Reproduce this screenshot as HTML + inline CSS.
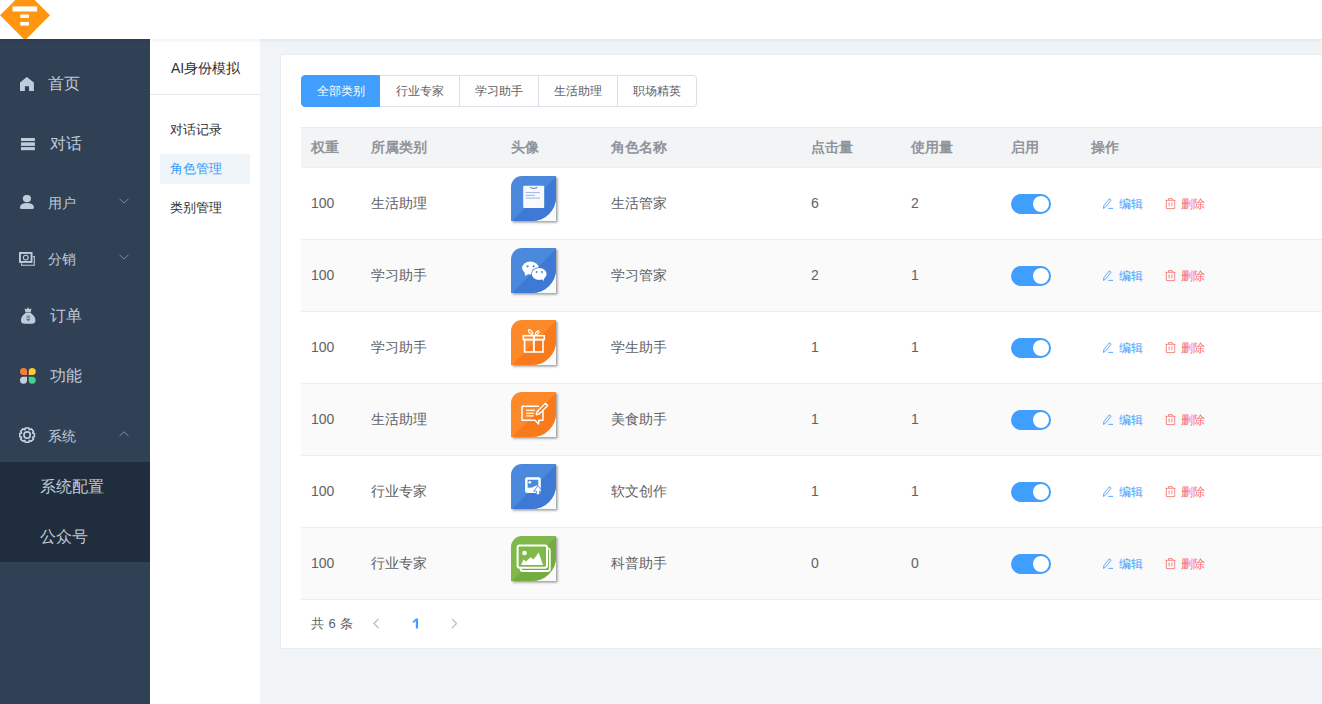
<!DOCTYPE html>
<html><head><meta charset="utf-8">
<style>
*{box-sizing:border-box;margin:0;padding:0}
html,body{width:1322px;height:704px;overflow:hidden;background:#f0f4f7;font-family:"Liberation Sans",sans-serif;position:relative}
.abs{position:absolute;white-space:nowrap}
#header{position:absolute;left:0;top:0;width:1322px;height:39px;background:#fff;z-index:3;box-shadow:0 1px 4px rgba(0,21,41,.08)}
#logo{position:absolute;left:0;top:0;width:50px;height:39px;z-index:4;overflow:hidden}
#side{position:absolute;left:0;top:39px;width:150px;height:665px;background:#304156}
#sub{position:absolute;left:0;top:423px;width:150px;height:100px;background:#1f2d3d}
.mi{position:absolute;color:#bfcbd9;line-height:1;white-space:nowrap}
.ic{position:absolute;line-height:0}
#side2{position:absolute;left:150px;top:39px;width:110px;height:665px;background:#fff}
.s2{position:absolute;left:20px;font-size:13px;color:#303133;line-height:1;white-space:nowrap}
#card{position:absolute;left:280px;top:54px;width:1100px;height:595px;background:#fff;border:1px solid #ebebeb}
.tab{position:absolute;top:75px;height:32px;width:80px;border:1px solid #dcdfe6;font-size:12px;color:#606266;text-align:center;line-height:31px;background:#fff;white-space:nowrap}
.th{position:absolute;top:127px;left:301px;width:1030px;height:41px;background:#f3f4f6;border-top:1px solid #ebebeb;border-bottom:1px solid #ebeef5}
.thc{position:absolute;font-size:14px;font-weight:bold;color:#909399;line-height:1;white-space:nowrap;top:140px}
.row{position:absolute;left:301px;width:1030px;height:72px;border-bottom:1px solid #ebeef5;background:#fff}
.row.s{background:#fafafa}
.c{position:absolute;font-size:14px;color:#606266;line-height:1;white-space:nowrap}
.sw{position:absolute;width:40px;height:20px;border-radius:10px;background:#409eff}
.sw:after{content:"";position:absolute;right:2px;top:2px;width:16px;height:16px;border-radius:50%;background:#fff}
.ed{position:absolute;font-size:12px;color:#409eff;line-height:1;white-space:nowrap}
.dl{position:absolute;font-size:12px;color:#f56c6c;line-height:1;white-space:nowrap}
</style></head><body>
<div id="header"></div>
<div id="logo"><svg width="50" height="39" viewBox="0 0 50 39"><path d="M25 -9.7 L50 15.3 L25 40.3 L0 15.3 Z" fill="#ff9511"/><rect x="12.6" y="6.4" width="24.6" height="5.1" fill="#fff"/><rect x="20.3" y="14.5" width="8.7" height="3.4" fill="#fff"/><rect x="20.3" y="22" width="8.7" height="3.6" fill="#fff"/></svg></div>

<div id="side">
<div id="sub"></div>
<div class="ic" style="left:20px;top:37px"><svg width="16" height="16" viewBox="0 0 16 16"><path d="M6.8 0.9 L13.9 6.6 V14.9 H9 V10.3 H4.9 V14.9 H0 V6.6 Z" fill="#c0ccda"/></svg></div>
<div class="mi" style="left:48px;top:37px;font-size:16px">首页</div>
<div class="ic" style="left:21px;top:99px"><svg width="16" height="16" viewBox="0 0 16 16"><rect x="0" y="0" width="13.9" height="3" fill="#c0ccda"/><rect x="0" y="4.3" width="13.9" height="3.6" fill="#c0ccda"/><rect x="0" y="9.1" width="13.9" height="3.1" fill="#c0ccda"/></svg></div>
<div class="mi" style="left:50px;top:97px;font-size:16px">对话</div>
<div class="ic" style="left:20px;top:156px"><svg width="16" height="16" viewBox="0 0 16 16"><ellipse cx="6.9" cy="3.6" rx="4.1" ry="3.7" fill="#c0ccda"/><path d="M0 12.5 Q0 8 6.9 8 Q13.9 8 13.9 12.5 Q13.9 14 12.5 14 H1.4 Q0 14 0 12.5Z" fill="#c0ccda"/></svg></div>
<div class="mi" style="left:48px;top:157px;font-size:14px">用户</div>
<div class="ic" style="left:119px;top:159px"><svg width="12" height="8" viewBox="0 0 12 8"><path d="M0.5 0.8 L5 5 L9.5 0.8" stroke="#7d8a9c" stroke-width="1" fill="none"/></svg></div>
<div class="ic" style="left:19px;top:213px"><svg width="18" height="16" viewBox="0 0 18 16"><g fill="none" stroke="#c0ccda"><path d="M2.6 11.3 V13.3 H15.3 V4.5 H13.9" stroke-width="1.1"/><rect x="0.95" y="0.95" width="11.6" height="9.0" stroke-width="1.9"/><circle cx="6.8" cy="5.6" r="2.4" stroke-width="1.1"/></g></svg></div>
<div class="mi" style="left:48px;top:213px;font-size:14px">分销</div>
<div class="ic" style="left:119px;top:215px"><svg width="12" height="8" viewBox="0 0 12 8"><path d="M0.5 0.8 L5 5 L9.5 0.8" stroke="#7d8a9c" stroke-width="1" fill="none"/></svg></div>
<div class="ic" style="left:20.8px;top:268.3px"><svg width="16" height="18" viewBox="0 0 16 18"><path d="M7.2 0.2 L8.4 2.3 L10.5 1.5 L9.6 5.4 H4.6 L3.5 1.5 L5.8 2.3 Z" fill="#c0ccda"/><path d="M4.5 5.9 H9.7 Q14.4 9.2 14.4 13.2 Q14.4 16.8 10.8 16.8 H3.6 Q0 16.8 0 13.2 Q0 9.2 4.5 5.9Z" fill="#c0ccda"/><g fill="#56647a"><rect x="5.5" y="8.8" width="3.6" height="0.9"/><rect x="5.5" y="10.5" width="3.6" height="0.9"/><rect x="5.5" y="12.2" width="3.6" height="0.9"/><path d="M6.2 13.1 H8.4 L7.3 14.3 Z"/></g></svg></div>
<div class="mi" style="left:50px;top:269px;font-size:16px">订单</div>
<div class="ic" style="left:20px;top:329px"><svg width="17" height="17" viewBox="0 0 17 17"><path d="M7 7 H3.5 A3.5 3.5 0 1 1 7 3.5 Z" fill="#fb7c34"/><path d="M8.7 7 V3.5 A3.5 3.5 0 1 1 12.2 7 Z" fill="#fdcc31"/><path d="M7 8.7 V12.2 A3.5 3.5 0 1 1 3.5 8.7 Z" fill="#c6d0dc"/><path d="M8.7 8.7 H12.2 A3.5 3.5 0 1 1 8.7 12.2 Z" fill="#48cf8d"/></svg></div>
<div class="mi" style="left:50px;top:329px;font-size:16px">功能</div>
<div class="ic" style="left:18.9px;top:388px"><svg width="18" height="18" viewBox="0 0 18 18"><g fill="none" stroke="#c8d3e0" stroke-width="1.6" stroke-linejoin="round"><path d="M6.3 1 H9.9 L10.4 2.8 L12.3 1.9 L14.5 4.2 L13.6 6 L15.4 6.6 V9.7 L13.6 10.3 L14.5 12.1 L12.3 14.3 L10.4 13.4 L9.9 15.2 H6.3 L5.8 13.4 L3.9 14.3 L1.7 12.1 L2.6 10.3 L0.8 9.7 V6.6 L2.6 6 L1.7 4.2 L3.9 1.9 L5.8 2.8 Z"/><circle cx="8.1" cy="8.1" r="3.2"/></g></svg></div>
<div class="mi" style="left:48px;top:389.5px;font-size:14px">系统</div>
<div class="ic" style="left:119px;top:391.5px"><svg width="12" height="8" viewBox="0 0 12 8"><path d="M0.5 5 L5 0.8 L9.5 5" stroke="#7d8a9c" stroke-width="1" fill="none"/></svg></div>
<div class="mi" style="left:40px;top:440px;font-size:16px">系统配置</div>
<div class="mi" style="left:40px;top:490px;font-size:16px">公众号</div>
</div>

<div id="side2">
<div class="s2" style="top:22px;left:21px;font-size:14px">AI身份模拟</div>
<div style="position:absolute;left:0;top:55px;width:110px;height:1px;background:#e6e6e6"></div>
<div class="s2" style="top:84px">对话记录</div>
<div style="position:absolute;left:10px;top:115px;width:90px;height:30px;background:#eef4f8"></div>
<div class="s2" style="top:122.5px;color:#3a9afc">角色管理</div>
<div class="s2" style="top:162px">类别管理</div>
</div>

<div id="card"></div>
<div class="tab" style="left:301px;width:79px;background:#409eff;border-color:#409eff;color:#fff;border-radius:4px 0 0 4px">全部类别</div>
<div class="tab" style="left:380px;border-left:0">行业专家</div>
<div class="tab" style="left:460px;width:79px;border-left:0">学习助手</div>
<div class="tab" style="left:539px;width:79px;border-left:0">生活助理</div>
<div class="tab" style="left:618px;width:79px;border-left:0;border-radius:0 4px 4px 0">职场精英</div>

<div class="th"></div>
<div class="thc" style="left:311px">权重</div>
<div class="thc" style="left:371px">所属类别</div>
<div class="thc" style="left:511px">头像</div>
<div class="thc" style="left:611px">角色名称</div>
<div class="thc" style="left:811px">点击量</div>
<div class="thc" style="left:911px">使用量</div>
<div class="thc" style="left:1011px">启用</div>
<div class="thc" style="left:1091px">操作</div>

<div class="row" style="top:168px"></div>
<div class="c" style="left:311px;top:196px">100</div>
<div class="c" style="left:371px;top:196px">生活助理</div>
<div class="abs" style="left:511px;top:176px;line-height:0"><svg width="49" height="49" viewBox="0 0 49 49"><defs><filter id="shdoc" x="-20%" y="-20%" width="140%" height="140%"><feGaussianBlur stdDeviation="0.8"/></filter><clipPath id="cldoc"><path d="M0 11 A11 11 0 0 1 11 0 H45 V21 A24 24 0 0 1 21 45 H0 Z"/></clipPath></defs><path d="M1.5 12.5 A11 11 0 0 1 12.5 1.5 H46.5 V46.5 H1.5 Z" fill="#9a9a9a" filter="url(#shdoc)"/><path d="M0 11 A11 11 0 0 1 11 0 H45 V45 H0 Z" fill="#f9fafb"/><g clip-path="url(#cldoc)"><rect width="45" height="45" fill="#4a89dc"/><path d="M0 46 L45 1 V45 H0 Z" fill="#3e7ad5"/></g><rect x="12.2" y="9.8" width="21" height="22.2" rx="1" fill="#f8f9fb"/><path d="M19.2 11.1 Q19.8 12.4 22.7 12.4 Q25.6 12.4 26.2 11.1" stroke="#5f8fdc" stroke-width="1.1" fill="none"/><rect x="14.5" y="16.2" width="14.5" height="0.9" fill="#8fb0e6"/><rect x="14.5" y="18.9" width="9.5" height="0.9" fill="#8fb0e6"/><rect x="14.5" y="21.6" width="14.5" height="0.9" fill="#8fb0e6"/></svg></div>
<div class="c" style="left:611px;top:196px">生活管家</div>
<div class="c" style="left:811px;top:196px">6</div>
<div class="c" style="left:911px;top:196px">2</div>
<div class="sw" style="left:1011px;top:194px"></div>
<div class="abs" style="left:1102px;top:198px;line-height:0"><svg width="12" height="12" viewBox="0 0 12 12"><path d="M1.5 10.4 L1.8 7.8 L7.3 0.8 L9.1 2.1 L3.6 9.1 Z" stroke="#409eff" stroke-width="0.85" fill="none" stroke-linejoin="round"/><path d="M6.3 10.4 H11" stroke="#409eff" stroke-width="0.9"/></svg></div>
<div class="ed" style="left:1119px;top:198px">编辑</div>
<div class="abs" style="left:1164.5px;top:198px;line-height:0"><svg width="12" height="12" viewBox="0 0 12 12"><g stroke="#f56c6c" stroke-width="0.8" fill="none"><path d="M0.6 2.3 H10.4"/><path d="M3.6 2.3 V0.6 H7.4 V2.3"/><path d="M1.3 2.3 V10.6 H9.7 V2.3"/><path d="M4.1 4.5 V8.3 M6.9 4.5 V8.3"/></g></svg></div>
<div class="dl" style="left:1181px;top:198px">删除</div>
<div class="row s" style="top:240px"></div>
<div class="c" style="left:311px;top:268px">100</div>
<div class="c" style="left:371px;top:268px">学习助手</div>
<div class="abs" style="left:511px;top:248px;line-height:0"><svg width="49" height="49" viewBox="0 0 49 49"><defs><filter id="shwechat" x="-20%" y="-20%" width="140%" height="140%"><feGaussianBlur stdDeviation="0.8"/></filter><clipPath id="clwechat"><path d="M0 11 A11 11 0 0 1 11 0 H45 V21 A24 24 0 0 1 21 45 H0 Z"/></clipPath></defs><path d="M1.5 12.5 A11 11 0 0 1 12.5 1.5 H46.5 V46.5 H1.5 Z" fill="#9a9a9a" filter="url(#shwechat)"/><path d="M0 11 A11 11 0 0 1 11 0 H45 V45 H0 Z" fill="#f9fafb"/><g clip-path="url(#clwechat)"><rect width="45" height="45" fill="#4a89dc"/><path d="M0 46 L45 1 V45 H0 Z" fill="#3e7ad5"/></g><ellipse cx="19.4" cy="20" rx="8.3" ry="6.4" fill="#fff"/><path d="M13.5 24.5 L14.5 28 L18 25.5Z" fill="#fff"/><ellipse cx="28.2" cy="26" rx="8.2" ry="6.8" fill="#3e7ad5"/><ellipse cx="28.2" cy="26" rx="7.4" ry="6" fill="#fff"/><path d="M30.5 30.5 L32.8 33 L33 29Z" fill="#fff"/><circle cx="16.6" cy="18.3" r="1.1" fill="#4a89dc"/><circle cx="22.6" cy="18.3" r="1.1" fill="#4a89dc"/><circle cx="25.6" cy="24" r="0.9" fill="#3e7ad5"/><circle cx="30.9" cy="24" r="0.9" fill="#3e7ad5"/></svg></div>
<div class="c" style="left:611px;top:268px">学习管家</div>
<div class="c" style="left:811px;top:268px">2</div>
<div class="c" style="left:911px;top:268px">1</div>
<div class="sw" style="left:1011px;top:266px"></div>
<div class="abs" style="left:1102px;top:270px;line-height:0"><svg width="12" height="12" viewBox="0 0 12 12"><path d="M1.5 10.4 L1.8 7.8 L7.3 0.8 L9.1 2.1 L3.6 9.1 Z" stroke="#409eff" stroke-width="0.85" fill="none" stroke-linejoin="round"/><path d="M6.3 10.4 H11" stroke="#409eff" stroke-width="0.9"/></svg></div>
<div class="ed" style="left:1119px;top:270px">编辑</div>
<div class="abs" style="left:1164.5px;top:270px;line-height:0"><svg width="12" height="12" viewBox="0 0 12 12"><g stroke="#f56c6c" stroke-width="0.8" fill="none"><path d="M0.6 2.3 H10.4"/><path d="M3.6 2.3 V0.6 H7.4 V2.3"/><path d="M1.3 2.3 V10.6 H9.7 V2.3"/><path d="M4.1 4.5 V8.3 M6.9 4.5 V8.3"/></g></svg></div>
<div class="dl" style="left:1181px;top:270px">删除</div>
<div class="row" style="top:312px"></div>
<div class="c" style="left:311px;top:340px">100</div>
<div class="c" style="left:371px;top:340px">学习助手</div>
<div class="abs" style="left:511px;top:320px;line-height:0"><svg width="49" height="49" viewBox="0 0 49 49"><defs><filter id="shgift" x="-20%" y="-20%" width="140%" height="140%"><feGaussianBlur stdDeviation="0.8"/></filter><clipPath id="clgift"><path d="M0 11 A11 11 0 0 1 11 0 H45 V21 A24 24 0 0 1 21 45 H0 Z"/></clipPath></defs><path d="M1.5 12.5 A11 11 0 0 1 12.5 1.5 H46.5 V46.5 H1.5 Z" fill="#9a9a9a" filter="url(#shgift)"/><path d="M0 11 A11 11 0 0 1 11 0 H45 V45 H0 Z" fill="#f9fafb"/><g clip-path="url(#clgift)"><rect width="45" height="45" fill="#fd8a2a"/><path d="M0 46 L45 1 V45 H0 Z" fill="#f87a1b"/></g><g stroke="#fff" stroke-width="1.6" fill="none"><rect x="12.3" y="15.7" width="21" height="3.9"/><rect x="13.6" y="19.6" width="18.4" height="12.4"/><path d="M22.9 15.5 V32" stroke-width="2"/><ellipse cx="19.6" cy="12" rx="2.9" ry="1.3" transform="rotate(50 19.6 12)" stroke-width="1.2"/><ellipse cx="26.2" cy="12.8" rx="2.3" ry="1.2" transform="rotate(-45 26.2 12.8)" stroke-width="1.2"/></g></svg></div>
<div class="c" style="left:611px;top:340px">学生助手</div>
<div class="c" style="left:811px;top:340px">1</div>
<div class="c" style="left:911px;top:340px">1</div>
<div class="sw" style="left:1011px;top:338px"></div>
<div class="abs" style="left:1102px;top:342px;line-height:0"><svg width="12" height="12" viewBox="0 0 12 12"><path d="M1.5 10.4 L1.8 7.8 L7.3 0.8 L9.1 2.1 L3.6 9.1 Z" stroke="#409eff" stroke-width="0.85" fill="none" stroke-linejoin="round"/><path d="M6.3 10.4 H11" stroke="#409eff" stroke-width="0.9"/></svg></div>
<div class="ed" style="left:1119px;top:342px">编辑</div>
<div class="abs" style="left:1164.5px;top:342px;line-height:0"><svg width="12" height="12" viewBox="0 0 12 12"><g stroke="#f56c6c" stroke-width="0.8" fill="none"><path d="M0.6 2.3 H10.4"/><path d="M3.6 2.3 V0.6 H7.4 V2.3"/><path d="M1.3 2.3 V10.6 H9.7 V2.3"/><path d="M4.1 4.5 V8.3 M6.9 4.5 V8.3"/></g></svg></div>
<div class="dl" style="left:1181px;top:342px">删除</div>
<div class="row s" style="top:384px"></div>
<div class="c" style="left:311px;top:412px">100</div>
<div class="c" style="left:371px;top:412px">生活助理</div>
<div class="abs" style="left:511px;top:392px;line-height:0"><svg width="49" height="49" viewBox="0 0 49 49"><defs><filter id="shchat" x="-20%" y="-20%" width="140%" height="140%"><feGaussianBlur stdDeviation="0.8"/></filter><clipPath id="clchat"><path d="M0 11 A11 11 0 0 1 11 0 H45 V21 A24 24 0 0 1 21 45 H0 Z"/></clipPath></defs><path d="M1.5 12.5 A11 11 0 0 1 12.5 1.5 H46.5 V46.5 H1.5 Z" fill="#9a9a9a" filter="url(#shchat)"/><path d="M0 11 A11 11 0 0 1 11 0 H45 V45 H0 Z" fill="#f9fafb"/><g clip-path="url(#clchat)"><rect width="45" height="45" fill="#fd8a2a"/><path d="M0 46 L45 1 V45 H0 Z" fill="#f87a1b"/></g><g stroke="#fff" stroke-width="1.5" fill="none" stroke-linejoin="round"><path d="M11 14.3 H28 M32 18.5 V28.3 H27.8 L27.6 32 L24 28.3 H11 V14.3"/></g><g fill="#fff"><rect x="15.2" y="17.7" width="8.7" height="1.2"/><rect x="15.2" y="20.7" width="7.5" height="1.2"/><rect x="15.2" y="23.3" width="7.5" height="1.2"/></g><path d="M25.2 22.8 L26 19.8 L34.5 11.3 L36.7 13.5 L28.2 22 Z" stroke="#fff" stroke-width="1.3" fill="none" stroke-linejoin="round"/><path d="M26.8 19.3 L29 21.5" stroke="#fff" stroke-width="1"/></svg></div>
<div class="c" style="left:611px;top:412px">美食助手</div>
<div class="c" style="left:811px;top:412px">1</div>
<div class="c" style="left:911px;top:412px">1</div>
<div class="sw" style="left:1011px;top:410px"></div>
<div class="abs" style="left:1102px;top:414px;line-height:0"><svg width="12" height="12" viewBox="0 0 12 12"><path d="M1.5 10.4 L1.8 7.8 L7.3 0.8 L9.1 2.1 L3.6 9.1 Z" stroke="#409eff" stroke-width="0.85" fill="none" stroke-linejoin="round"/><path d="M6.3 10.4 H11" stroke="#409eff" stroke-width="0.9"/></svg></div>
<div class="ed" style="left:1119px;top:414px">编辑</div>
<div class="abs" style="left:1164.5px;top:414px;line-height:0"><svg width="12" height="12" viewBox="0 0 12 12"><g stroke="#f56c6c" stroke-width="0.8" fill="none"><path d="M0.6 2.3 H10.4"/><path d="M3.6 2.3 V0.6 H7.4 V2.3"/><path d="M1.3 2.3 V10.6 H9.7 V2.3"/><path d="M4.1 4.5 V8.3 M6.9 4.5 V8.3"/></g></svg></div>
<div class="dl" style="left:1181px;top:414px">删除</div>
<div class="row" style="top:456px"></div>
<div class="c" style="left:311px;top:484px">100</div>
<div class="c" style="left:371px;top:484px">行业专家</div>
<div class="abs" style="left:511px;top:464px;line-height:0"><svg width="49" height="49" viewBox="0 0 49 49"><defs><filter id="shimgup" x="-20%" y="-20%" width="140%" height="140%"><feGaussianBlur stdDeviation="0.8"/></filter><clipPath id="climgup"><path d="M0 11 A11 11 0 0 1 11 0 H45 V21 A24 24 0 0 1 21 45 H0 Z"/></clipPath></defs><path d="M1.5 12.5 A11 11 0 0 1 12.5 1.5 H46.5 V46.5 H1.5 Z" fill="#9a9a9a" filter="url(#shimgup)"/><path d="M0 11 A11 11 0 0 1 11 0 H45 V45 H0 Z" fill="#f9fafb"/><g clip-path="url(#climgup)"><rect width="45" height="45" fill="#4a89dc"/><path d="M0 46 L45 1 V45 H0 Z" fill="#3e7ad5"/></g><rect x="14.1" y="13.2" width="15.7" height="15.8" rx="2" fill="#fff"/><path d="M16.6 15.7 H27.3 V21.5 Q25 21 23 22.5 Q20.5 24.5 16.6 23.5 Z" fill="#4a89dc"/><circle cx="18.8" cy="18.3" r="1.4" fill="#fff"/><path d="M22 27.5 L27 21.3 L32 27.5 H29 V31 H25 V27.5 Z" fill="#3e7ad5"/><path d="M23.5 26.8 L27 22.3 L30.5 26.8 H28.3 V30.3 H25.7 V26.8 Z" fill="#fff"/></svg></div>
<div class="c" style="left:611px;top:484px">软文创作</div>
<div class="c" style="left:811px;top:484px">1</div>
<div class="c" style="left:911px;top:484px">1</div>
<div class="sw" style="left:1011px;top:482px"></div>
<div class="abs" style="left:1102px;top:486px;line-height:0"><svg width="12" height="12" viewBox="0 0 12 12"><path d="M1.5 10.4 L1.8 7.8 L7.3 0.8 L9.1 2.1 L3.6 9.1 Z" stroke="#409eff" stroke-width="0.85" fill="none" stroke-linejoin="round"/><path d="M6.3 10.4 H11" stroke="#409eff" stroke-width="0.9"/></svg></div>
<div class="ed" style="left:1119px;top:486px">编辑</div>
<div class="abs" style="left:1164.5px;top:486px;line-height:0"><svg width="12" height="12" viewBox="0 0 12 12"><g stroke="#f56c6c" stroke-width="0.8" fill="none"><path d="M0.6 2.3 H10.4"/><path d="M3.6 2.3 V0.6 H7.4 V2.3"/><path d="M1.3 2.3 V10.6 H9.7 V2.3"/><path d="M4.1 4.5 V8.3 M6.9 4.5 V8.3"/></g></svg></div>
<div class="dl" style="left:1181px;top:486px">删除</div>
<div class="row s" style="top:528px"></div>
<div class="c" style="left:311px;top:556px">100</div>
<div class="c" style="left:371px;top:556px">行业专家</div>
<div class="abs" style="left:511px;top:536px;line-height:0"><svg width="49" height="49" viewBox="0 0 49 49"><defs><filter id="shgallery" x="-20%" y="-20%" width="140%" height="140%"><feGaussianBlur stdDeviation="0.8"/></filter><clipPath id="clgallery"><path d="M0 11 A11 11 0 0 1 11 0 H45 V21 A24 24 0 0 1 21 45 H0 Z"/></clipPath></defs><path d="M1.5 12.5 A11 11 0 0 1 12.5 1.5 H46.5 V46.5 H1.5 Z" fill="#9a9a9a" filter="url(#shgallery)"/><path d="M0 11 A11 11 0 0 1 11 0 H45 V45 H0 Z" fill="#f9fafb"/><g clip-path="url(#clgallery)"><rect width="45" height="45" fill="#80b84b"/><path d="M0 46 L45 1 V45 H0 Z" fill="#74ad3f"/></g><rect x="9.6" y="12.4" width="29.2" height="22.6" rx="2" stroke="#fff" stroke-width="1.8" fill="none"/><rect x="6.6" y="9.6" width="29.4" height="22.2" rx="2" fill="#80b84b" stroke="#fff" stroke-width="2"/><circle cx="13.5" cy="17" r="2.3" fill="#fff"/><path d="M10.2 29 L12.4 23.4 L15 25.6 L19.6 21.3 L22.5 23.4 L27.7 16.6 L32 29 Z" fill="#fff"/></svg></div>
<div class="c" style="left:611px;top:556px">科普助手</div>
<div class="c" style="left:811px;top:556px">0</div>
<div class="c" style="left:911px;top:556px">0</div>
<div class="sw" style="left:1011px;top:554px"></div>
<div class="abs" style="left:1102px;top:558px;line-height:0"><svg width="12" height="12" viewBox="0 0 12 12"><path d="M1.5 10.4 L1.8 7.8 L7.3 0.8 L9.1 2.1 L3.6 9.1 Z" stroke="#409eff" stroke-width="0.85" fill="none" stroke-linejoin="round"/><path d="M6.3 10.4 H11" stroke="#409eff" stroke-width="0.9"/></svg></div>
<div class="ed" style="left:1119px;top:558px">编辑</div>
<div class="abs" style="left:1164.5px;top:558px;line-height:0"><svg width="12" height="12" viewBox="0 0 12 12"><g stroke="#f56c6c" stroke-width="0.8" fill="none"><path d="M0.6 2.3 H10.4"/><path d="M3.6 2.3 V0.6 H7.4 V2.3"/><path d="M1.3 2.3 V10.6 H9.7 V2.3"/><path d="M4.1 4.5 V8.3 M6.9 4.5 V8.3"/></g></svg></div>
<div class="dl" style="left:1181px;top:558px">删除</div>

<div class="abs" style="left:311px;top:617px;font-size:13px;color:#606266;line-height:1;word-spacing:1px">共 6 条</div>
<div class="ic" style="left:372px;top:618px"><svg width="10" height="12" viewBox="0 0 10 12"><path d="M6.5 1 L2 5.5 L6.5 10" stroke="#bcc1ca" stroke-width="1.4" fill="none"/></svg></div>
<div class="ic" style="left:412px;top:617.5px"><svg width="8" height="12" viewBox="0 0 8 12"><path d="M3.8 0.6 H6 V10.6 H3.8 V3 Q2.5 4.3 0.8 5 V3.2 Q2.6 2.2 3.8 0.6 Z" fill="#409eff"/></svg></div>
<div class="ic" style="left:450px;top:618px"><svg width="10" height="12" viewBox="0 0 10 12"><path d="M2 1 L6.5 5.5 L2 10" stroke="#bcc1ca" stroke-width="1.4" fill="none"/></svg></div>
</body></html>
